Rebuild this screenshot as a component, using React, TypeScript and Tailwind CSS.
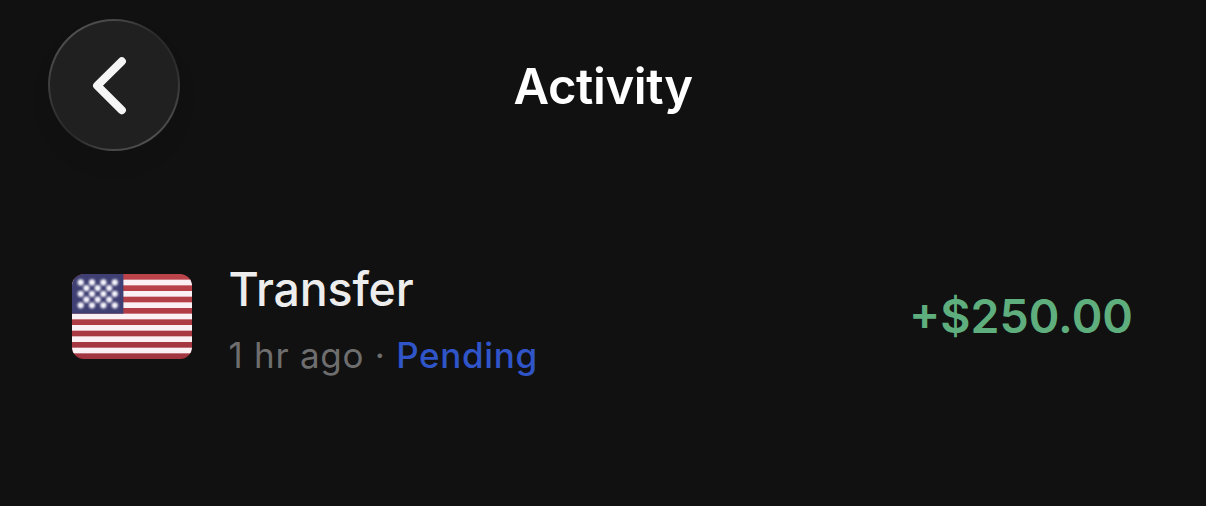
const STRIPES = Array.from({ length: 15 }, (_, i) => i);
const STAR_ROWS = [
  [8.7, 20, 31.4, 42.8],
  [14.4, 25.7, 37.2],
  [8.7, 20, 31.4, 42.8],
  [14.4, 25.7, 37.2],
  [8.7, 20, 31.4, 42.8],
];

function UsFlag() {
  return (
    <svg width="120" height="85" viewBox="0 0 120 85" className="shrink-0 rounded-[12px]" aria-label="United States">
      <defs>
        <linearGradient id="flagShade" x1="0" y1="0" x2="0" y2="1">
          <stop offset="0" stopColor="#bd444b" />
          <stop offset="1" stopColor="#a0343f" />
        </linearGradient>
        <filter id="starSoft" x="-10%" y="-10%" width="120%" height="120%">
          <feGaussianBlur stdDeviation="0.8" />
        </filter>
      </defs>
      <rect width="120" height="85" fill="url(#flagShade)" />
      {STRIPES.filter((i) => i % 2 === 1).map((i) => (
        <rect key={i} y={i * 5.667} width="120" height="5.667" fill="#fbf0f3" />
      ))}
      <rect width="51.4" height="39.67" fill="#3f3f73" />
      <g fill="#f6f5fc" filter="url(#starSoft)">
        {STAR_ROWS.map((row, r) =>
          row.map((x) => <circle key={`${r}-${x}`} cx={x} cy={8.4 + r * 5.72} r="3.1" />)
        )}
      </g>
    </svg>
  );
}

function BackButton() {
  return (
    <button
      aria-label="Back"
      className="size-[132px] rounded-full bg-[conic-gradient(from_0deg,#484848_0deg,#2a2a2a_40deg,#2c2c2c_70deg,#444444_110deg,#505050_145deg,#484848_185deg,#282828_220deg,#343434_250deg,#464646_285deg,#505050_325deg,#484848_360deg)] p-[2px] shadow-[0_14px_20px_rgba(0,0,0,0.07)]"
    >
      <span className="flex size-full items-center justify-center rounded-full bg-[#202020]">
        <svg width="128" height="128" viewBox="50 21 128 128" fill="none">
          <path
            d="M121.8 61.3 97.2 85.7l24.6 24.4"
            stroke="#f5f5f5"
            strokeWidth="8.2"
            strokeLinecap="round"
            strokeLinejoin="round"
          />
        </svg>
      </span>
    </button>
  );
}

export default function App() {
  return (
    <main className="h-[506px] w-full overflow-hidden bg-[#111111] font-['Inter',sans-serif]">
      <header className="grid grid-cols-[132px_1fr_132px] items-center px-12 pt-[19px]">
        <BackButton />
        <h1 className="pt-[4px] text-center text-[49px] leading-[60px] font-semibold tracking-[-0.4px] text-white">
          Activity
        </h1>
      </header>
      <section className="flex items-center pt-[104px] pr-[73px] pl-[72px]">
        <UsFlag />
        <div className="ml-[36.5px] flex-1 pt-[4px] pb-[1px]">
          <p className="text-[46.5px] leading-[60px] font-medium tracking-[-0.2px] text-[#ededed]">Transfer</p>
          <p className="mt-[14px] text-[35px] leading-[44px] tracking-[0.73px] text-[#6e6e6e]">
            1 hr ago · <span className="font-medium tracking-[0.65px] text-[#2f55c8]">Pending</span>
          </p>
        </div>
        <p className="pb-[2px] text-[46.5px] leading-[60px] font-semibold text-[#5fae7e]">+$250.00</p>
      </section>
    </main>
  );
}
